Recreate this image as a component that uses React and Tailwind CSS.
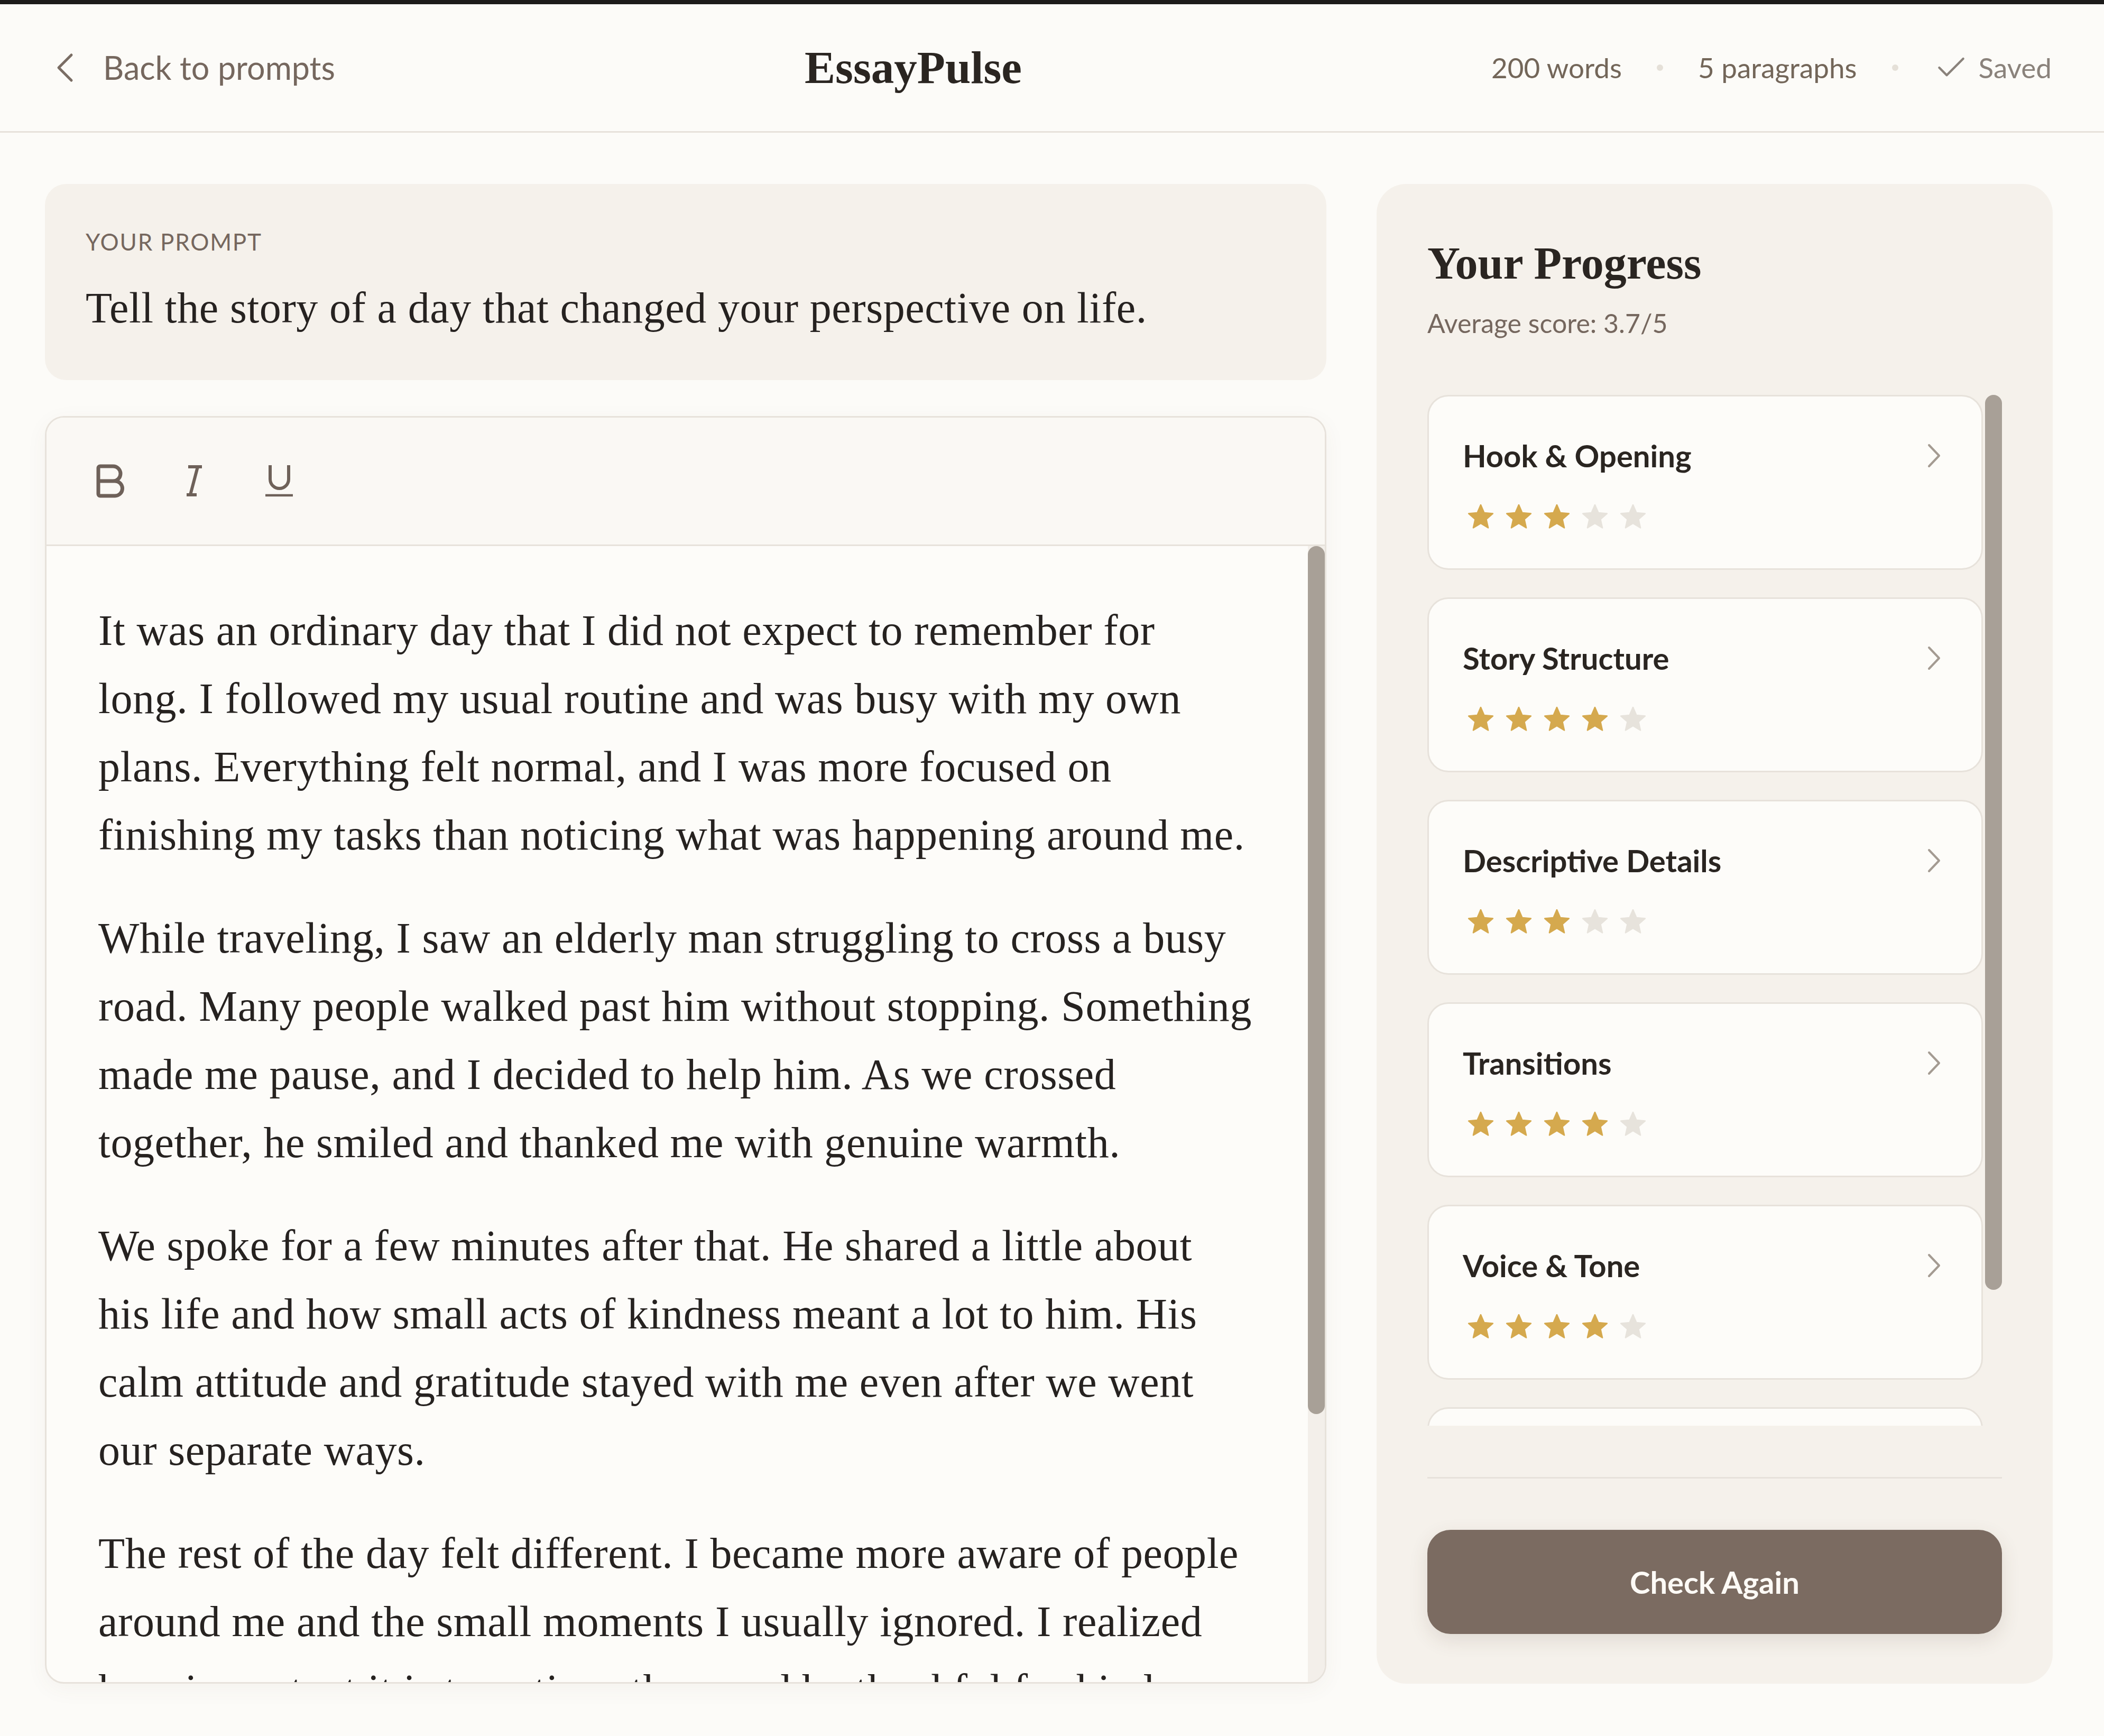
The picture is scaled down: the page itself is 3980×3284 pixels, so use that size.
import React from "react";
import { Bold, Check } from "lucide-react";

const SANS = { fontFamily: "Lato, 'Noto Sans', sans-serif" };
const SERIF = { fontFamily: "'Liberation Serif', serif" };

function starPoints(cx, cy, R, r) {
  const pts = [];
  for (let i = 0; i < 10; i++) {
    const a = ((-90 + i * 36) * Math.PI) / 180;
    const rad = i % 2 === 0 ? R : r;
    pts.push(`${(cx + rad * Math.cos(a)).toFixed(2)},${(cy + rad * Math.sin(a)).toFixed(2)}`);
  }
  return pts.join(" ");
}

const STAR = starPoints(25, 25, 24, 11);

function Star({ filled }) {
  const c = filled ? "#d5a94e" : "#e7e3dc";
  return (
    <svg width="50" height="48" viewBox="0 0 50 48" className="block">
      <polygon points={STAR} fill={c} stroke={c} strokeWidth="2.5" strokeLinejoin="round" />
    </svg>
  );
}

function ChevronRightIcon() {
  return (
    <svg width="26" height="46" viewBox="0 0 26 46" className="block">
      <polyline points="3,3 22,23 3,43" fill="none" stroke="#a49b92" strokeWidth="4" strokeLinecap="round" strokeLinejoin="round" />
    </svg>
  );
}

function CriterionCard({ title, score }) {
  return (
    <div className="shrink-0 rounded-[40px] border-[3px] border-[#e7e2db] bg-[#fdfcf9] pl-[64px] pr-[76px] pt-[76px] pb-[73px]">
      <div className="flex items-center justify-between h-[71px]">
        <span className="text-[58px] leading-[1.2] font-bold text-[#2a2521]" style={SANS}>{title}</span>
        <ChevronRightIcon />
      </div>
      <div className="flex gap-[22px] mt-[57px] ml-[9px]">
        {[1, 2, 3, 4, 5].map((i) => (
          <Star key={i} filled={i <= score} />
        ))}
      </div>
    </div>
  );
}

const paragraphs = [
  [
    "It was an ordinary day that I did not expect to remember for",
    "long. I followed my usual routine and was busy with my own",
    "plans. Everything felt normal, and I was more focused on",
    "finishing my tasks than noticing what was happening around me.",
  ],
  [
    "While traveling, I saw an elderly man struggling to cross a busy",
    "road. Many people walked past him without stopping. Something",
    "made me pause, and I decided to help him. As we crossed",
    "together, he smiled and thanked me with genuine warmth.",
  ],
  [
    "We spoke for a few minutes after that. He shared a little about",
    "his life and how small acts of kindness meant a lot to him. His",
    "calm attitude and gratitude stayed with me even after we went",
    "our separate ways.",
  ],
  [
    "The rest of the day felt different. I became more aware of people",
    "around me and the small moments I usually ignored. I realized",
    "how important it is to notice others and be thankful for kindness.",
    "That day taught me that little moments can change everything.",
  ],
];

const criteria = [
  ["Hook & Opening", 3],
  ["Story Structure", 4],
  ["Descriptive Details", 3],
  ["Transitions", 4],
  ["Voice & Tone", 4],
  ["Conclusion", 4],
];

export default function App() {
  return (
    <div className="w-[3980px] h-[3284px] bg-[#fcfbf8] flex flex-col overflow-hidden">
      <div className="h-[8px] shrink-0 bg-[#1c1b1a]" />
      <header className="h-[243px] shrink-0 flex items-center justify-between pl-[105px] pr-[99px] border-b-[3px] border-[#e7e2db]">
        <div className="flex items-center gap-[54px]">
          <svg width="36" height="56" viewBox="0 0 36 56" className="block">
            <polyline points="30,4 6,28 30,52" fill="none" stroke="#7a6d64" strokeWidth="5" strokeLinecap="round" strokeLinejoin="round" />
          </svg>
          <span className="text-[61px] leading-[1.2] text-[#75675e]" style={SANS}>Back to prompts</span>
        </div>
        <div className="text-[87px] leading-[1.2] font-bold text-[#2a2521]" style={SERIF}>
          EssayPulse
        </div>
        <div className="flex items-center gap-[66px] text-[53px] leading-[1.2]" style={SANS}>
          <span className="text-[#736659]">200 words</span>
          <span className="w-[12px] h-[12px] rounded-full bg-[#e5e0d8]" />
          <span className="text-[#736659]">5 paragraphs</span>
          <span className="w-[12px] h-[12px] rounded-full bg-[#e5e0d8]" />
          <span className="flex items-center gap-[18px] text-[#8a827b]">
            <Check size={68} strokeWidth={1.5} color="#8a827b" />
            <span>Saved</span>
          </span>
        </div>
      </header>

      <main className="flex-1 min-h-0 flex gap-[95px] pl-[85px] pr-[97px] pt-[97px] pb-[99px]">
        <div className="flex-1 min-w-0 flex flex-col gap-[68px]">
          <section className="shrink-0 rounded-[40px] bg-[#f5f1eb] pl-[77px] pt-[83px] pb-[72px]">
            <div className="text-[44px] leading-[1.2] tracking-[0.04em] text-[#75675e]" style={SANS}>YOUR PROMPT</div>
            <div
              className="mt-[34px] text-[82px] leading-[129px] tracking-[0.6px] text-[#262220] whitespace-nowrap"
              style={SERIF}
            >
              Tell the story of a day that changed your perspective on life.
            </div>
          </section>

          <section className="flex-1 min-h-0 flex flex-col rounded-[36px] border-[3px] border-[#e7e2db] bg-[#fdfcf9] overflow-hidden shadow-[0_10px_40px_rgba(90,70,50,0.05)]">
            <div className="h-[243px] shrink-0 flex items-center bg-[#faf8f4] border-b-[3px] border-[#e7e2db] pl-[77px]">
              <Bold size={84} strokeWidth={2} color="#6e6159" />
              <svg width="34" height="62" viewBox="0 0 34 62" className="block ml-[102px]">
                <g fill="none" stroke="#6e6159" strokeWidth="6">
                  <line x1="5" y1="4" x2="31" y2="4" />
                  <line x1="2" y1="57" x2="21" y2="57" />
                  <line x1="23" y1="4" x2="9" y2="57" />
                </g>
              </svg>
              <svg width="56" height="62" viewBox="0 0 56 62" className="block ml-[115px]">
                <g fill="none" stroke="#6e6159">
                  <path d="M11 1 V27.5 A17.5 17.5 0 0 0 46 27.5 V1" strokeWidth="6" />
                  <line x1="2" y1="58" x2="54" y2="58" strokeWidth="4.5" />
                </g>
              </svg>
            </div>
            <div className="flex-1 min-h-0 flex">
              <div
                className="flex-1 min-w-0 overflow-hidden pl-[98px] pt-[95px] text-[82px] leading-[129px] tracking-[0.6px] text-[#262220] whitespace-nowrap"
                style={SERIF}
              >
                {paragraphs.map((lines, pi) => (
                  <p key={pi} className={pi > 0 ? "mt-[66px]" : ""}>
                    {lines.map((l, li) => (
                      <React.Fragment key={li}>
                        {l}
                        {li < lines.length - 1 && <br />}
                      </React.Fragment>
                    ))}
                  </p>
                ))}
              </div>
              <div className="w-[32px] shrink-0 bg-[#f3efea]">
                <div className="h-[1642px] rounded-full bg-[#a8a097]" />
              </div>
            </div>
          </section>
        </div>

        <aside className="w-[1279px] shrink-0 flex flex-col rounded-[56px] bg-[#f5f1eb] px-[96px] pt-[99px] pb-[93px]">
          <div className="text-[86px] leading-[1.2] font-bold text-[#2a2521]" style={SERIF}>
            Your Progress
          </div>
          <div className="mt-[31px] text-[50px] leading-[1.2] text-[#75675e]" style={SANS}>Average score: 3.7/5</div>

          <div className="mt-[106px] h-[1950px] shrink-0 flex gap-[4px]">
            <div className="flex-1 min-w-0 overflow-hidden flex flex-col gap-[52px]">
              {criteria.map(([t, s]) => (
                <CriterionCard key={t} title={t} score={s} />
              ))}
            </div>
            <div className="w-[32px] shrink-0">
              <div className="h-[1693px] rounded-full bg-[#a8a097]" />
            </div>
          </div>

          <div className="mt-[97px] h-[3px] shrink-0 bg-[#e7e2db]" />
          <button
            className="mt-[97px] h-[197px] shrink-0 rounded-[44px] bg-[#7b6b61] text-[58px] font-bold text-[#fdfaf6] shadow-[0_12px_36px_rgba(80,60,45,0.12)]"
            style={SANS}
          >
            Check Again
          </button>
        </aside>
      </main>
    </div>
  );
}
